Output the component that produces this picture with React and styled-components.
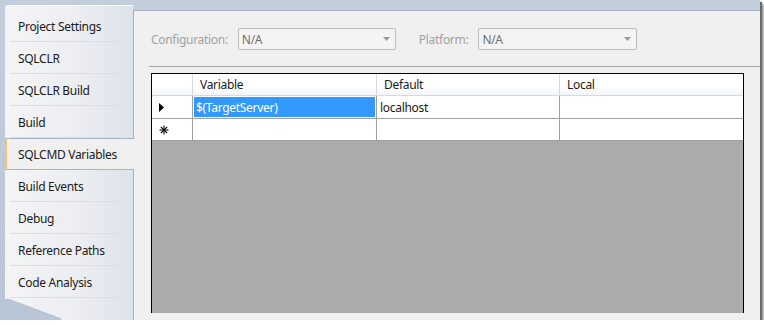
import React from 'react';
import styled, { createGlobalStyle } from 'styled-components';

const GlobalStyle = createGlobalStyle`
	html, body {
		margin: 0;
		padding: 0;
		background: #ffffff;
	}
	body {
		font-family: 'Segoe UI', 'Noto Sans', 'Open Sans', sans-serif;
		font-size: 12px;
		letter-spacing: -0.3px;
		color: #1b1b1b;
	}
`;

const tabs = [
	'Project Settings',
	'SQLCLR',
	'SQLCLR Build',
	'Build',
	'SQLCMD Variables',
	'Build Events',
	'Debug',
	'Reference Paths',
	'Code Analysis',
];

const Window = styled.div`
	width: 760px;
	height: 320px;
	background: linear-gradient(to bottom, #c3cedd, #b9c6d8);
	box-shadow: 2px 2px 1px #6b6b6b, 4px 4px 2px rgba(0, 0, 0, 0.35);
	display: flex;
	align-items: flex-start;
`;

const Sidebar = styled.div`
	position: relative;
	z-index: 2;
	margin: 5px 0 0 5px;
	width: 128px;
	height: 315px;
	box-sizing: border-box;
	padding-top: 5px;
	border-radius: 4px 0 0 0;
	background: linear-gradient(to right, #f4f4f6 0%, #eceef2 55%, #dde2ea 100%);
	box-shadow: inset 0 1px 0 #ffffff;
	clip-path: polygon(0 0, calc(100% + 3px) 0, calc(100% + 3px) 100%, 56px 100%, 0 294px);
`;

const Fold = styled.div`
	position: absolute;
	left: 0;
	bottom: 0;
	width: 56px;
	height: 21px;
	background: linear-gradient(
		to top right,
		transparent 46%,
		#9eabbf 50%,
		transparent 56%
	);
`;

const Tab = styled.div`
	position: relative;
	height: 32px;
	box-sizing: border-box;
	display: flex;
	align-items: center;
	padding-left: 13px;
	white-space: nowrap;
	color: #1b1b1b;
	${(p) =>
		p.active
			? `
		margin-right: -1px;
		padding-left: 11px;
		background: #f0f0f0;
		border-left: 2px solid #f3c46b;
		border-top: 1px solid #a7b3c6;
		border-bottom: 1px solid #a7b3c6;
	`
			: `
		&::after {
			content: '';
			position: absolute;
			left: 5px;
			right: 15px;
			bottom: 0;
			height: 1px;
			background: #d9dde4;
		}
	`}
`;

const Panel = styled.div`
	flex: 1;
	margin-top: 10px;
	height: 310px;
	box-sizing: border-box;
	background: #f0f0f0;
	border-top: 1px solid #a5b1c3;
	border-left: 1px solid #a5b1c3;
	display: flex;
	flex-direction: column;
`;

const ConfigRow = styled.div`
	display: flex;
	align-items: center;
	padding: 17px 0 0 17px;
`;

const Label = styled.span`
	color: #a2a2a2;
	margin-right: 10px;
`;

const Select = styled.div`
	width: ${(p) => p.width}px;
	height: 22px;
	box-sizing: border-box;
	border: 1px solid #bdbdbd;
	border-radius: 2px;
	background: #f4f4f4;
	display: flex;
	align-items: center;
	justify-content: space-between;
	padding: 0 5px 0 3px;
	margin-right: ${(p) => p.gap || 0}px;
	color: #6f6f6f;
`;

const Rule = styled.div`
	height: 1px;
	margin: 16px 0 0 15px;
	background: #a3a3a3;
`;

const Grid = styled.div`
	flex: 1;
	margin: 6px 0 7px 17px;
	width: 593px;
	box-sizing: border-box;
	border: 1px solid #000000;
	border-bottom: none;
	display: flex;
	flex-direction: column;
	background: #ababab;
`;

const Row = styled.div`
	display: grid;
	grid-template-columns: 41px 184px 183px 183px;
	height: ${(p) => p.h}px;
	background: #ffffff;
`;

const HeadCell = styled.div`
	box-sizing: border-box;
	border-right: ${(p) => (p.last ? 'none' : '1px solid #d6d9de')};
	border-bottom: 1px solid #d6d9de;
	background: linear-gradient(to bottom, #ffffff 0%, #ffffff 60%, #f3f5f8 100%);
	display: flex;
	align-items: center;
	padding-left: 7px;
	color: #1b1b1b;
`;

const Cell = styled.div`
	box-sizing: border-box;
	border-right: ${(p) => (p.last ? 'none' : '1px solid #a0a0a0')};
	border-bottom: 1px solid #a0a0a0;
	display: flex;
	align-items: center;
	padding-left: ${(p) => (p.marker ? 7 : 3)}px;
	background: ${(p) => (p.selected ? '#3399ff' : '#ffffff')};
	color: ${(p) => (p.selected ? '#ffffff' : '#1b1b1b')};
	white-space: nowrap;
	overflow: hidden;
	${(p) => (p.selected ? 'box-shadow: inset 0 0 0 1px #ffffff;' : '')}
`;

const Empty = styled.div`
	flex: 1;
	background: #ababab;
`;

const Arrow = () => (
	<svg width="7" height="4" viewBox="0 0 7 4">
		<polygon points="0,0 7,0 3.5,4" fill="#9a9a9a" />
	</svg>
);

const CurrentRow = () => (
	<svg width="5" height="9" viewBox="0 0 5 9">
		<polygon points="0,0 5,4.5 0,9" fill="#000000" />
	</svg>
);

const NewRow = () => (
	<svg width="10" height="10" viewBox="0 0 10 10">
		<g stroke="#000000" strokeWidth="1.1">
			<line x1="5" y1="0.5" x2="5" y2="9.5" />
			<line x1="0.5" y1="5" x2="9.5" y2="5" />
			<line x1="1.8" y1="1.8" x2="8.2" y2="8.2" />
			<line x1="8.2" y1="1.8" x2="1.8" y2="8.2" />
		</g>
	</svg>
);

export default function App() {
	return (
		<>
			<GlobalStyle />
			<Window>
				<Sidebar>
					{tabs.map((t) => (
						<Tab key={t} active={t === 'SQLCMD Variables'}>
							{t}
						</Tab>
					))}
					<Fold />
				</Sidebar>
				<Panel>
					<ConfigRow>
						<Label>Configuration:</Label>
						<Select width={158} gap={23}>
							N/A
							<Arrow />
						</Select>
						<Label>Platform:</Label>
						<Select width={159}>
							N/A
							<Arrow />
						</Select>
					</ConfigRow>
					<Rule />
					<Grid>
						<Row h={22}>
							<HeadCell />
							<HeadCell>Variable</HeadCell>
							<HeadCell>Default</HeadCell>
							<HeadCell last>Local</HeadCell>
						</Row>
						<Row h={23}>
							<Cell marker>
								<CurrentRow />
							</Cell>
							<Cell selected>$(TargetServer)</Cell>
							<Cell>localhost</Cell>
							<Cell last />
						</Row>
						<Row h={22}>
							<Cell marker>
								<NewRow />
							</Cell>
							<Cell />
							<Cell />
							<Cell last />
						</Row>
						<Empty />
					</Grid>
				</Panel>
			</Window>
		</>
	);
}
